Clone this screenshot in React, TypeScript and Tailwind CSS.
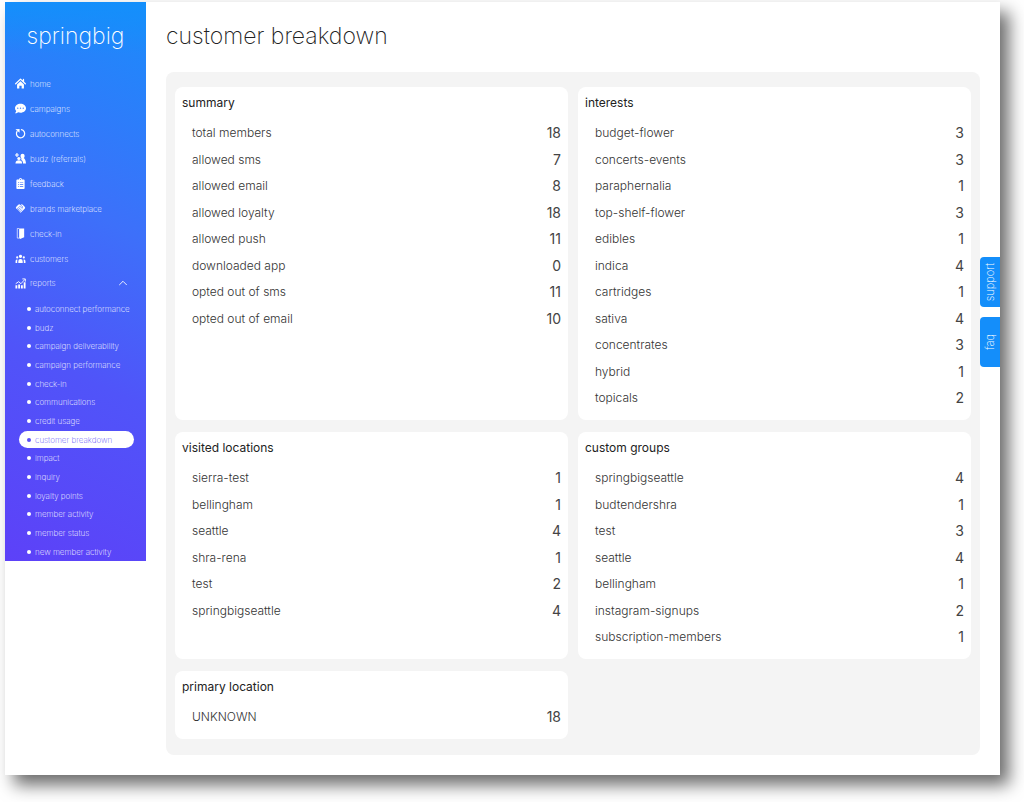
import clsx from "clsx";
import type { ComponentType, SVGProps } from "react";
import { FaCommentDots, FaClipboardList } from "react-icons/fa";
import { HiUserGroup } from "react-icons/hi";
import { MdHandshake } from "react-icons/md";
import { ChevronUp } from "lucide-react";

type IconProps = Pick<SVGProps<SVGSVGElement>, "className">;

interface NavItem {
	label: string;
	icon: ComponentType<IconProps>;
}

interface Group {
	title: string;
	rows: [string, number][];
}

function HomeIcon({ className }: IconProps) {
	return (
		<svg viewBox="0 0 24 24" className={className} aria-hidden="true">
			<path
				d="M1.5 12.5 12 2.5l10.500 10M18.500 3v5"
				fill="none"
				stroke="currentColor"
				strokeWidth="2.8"
				strokeLinecap="round"
				strokeLinejoin="round"
			/>
			<path
				d="M4.500 14 12 7l7.500 7v9h-5v-6h-5v6h-5z"
				fill="currentColor"
			/>
		</svg>
	);
}

function RefreshIcon({ className }: IconProps) {
	return (
		<svg viewBox="0 0 24 24" className={className} aria-hidden="true">
			<path
				d="M14 3.500a9 9 0 1 1-9.500 4"
				fill="none"
				stroke="currentColor"
				strokeWidth="2.6"
				strokeLinecap="round"
			/>
			<path d="M1 2.500 10 2v8.500z" fill="currentColor" />
		</svg>
	);
}

function ReferralIcon({ className }: IconProps) {
	return (
		<svg viewBox="0 0 24 24" className={className} aria-hidden="true">
			<path d="M3 0h2.500v3h3v2.500h-3v3H3v-3H0V3h3z" fill="currentColor" />
			<circle cx="8.500" cy="12" r="3.500" fill="currentColor" />
			<path d="M1 23c0-5 3-7 7.500-7s7 2 7 7z" fill="currentColor" />
			<path
				d="M12 6a4.500 4.500 0 0 1 9 0c0 2.500-.8 4-2 5 3 2 4.500 6 5 12h-6.500c0-4-1-6-4-7.500 1-3 .5-5-1-6.500z"
				fill="currentColor"
			/>
		</svg>
	);
}

function DoorIcon({ className }: IconProps) {
	return (
		<svg viewBox="0 0 24 24" className={className} aria-hidden="true">
			<path
				d="M9 1H5v21h4"
				fill="none"
				stroke="currentColor"
				strokeWidth="1.5"
			/>
			<path d="M9 1h11v19l-9 4-2-2z" fill="currentColor" />
		</svg>
	);
}

function ReportsIcon({ className }: IconProps) {
	return (
		<svg viewBox="0 0 24 24" className={className} aria-hidden="true">
			<path
				d="M1 16h4v7H1zM7 14h4v9H7zM13 16h4v7h-4zM19 9h4v14h-4z"
				fill="currentColor"
			/>
			<path
				d="M1.500 12.500 8 8l5 4.500L21.500 3M16 2h6.500v6"
				fill="none"
				stroke="currentColor"
				strokeWidth="2"
			/>
		</svg>
	);
}

const navItems: NavItem[] = [
	{ label: "home", icon: HomeIcon },
	{ label: "campaigns", icon: FaCommentDots },
	{ label: "autoconnects", icon: RefreshIcon },
	{ label: "budz (referrals)", icon: ReferralIcon },
	{ label: "feedback", icon: FaClipboardList },
	{ label: "brands marketplace", icon: MdHandshake },
	{ label: "check-in", icon: DoorIcon },
	{ label: "customers", icon: HiUserGroup },
];

const reports = [
	"autoconnect performance",
	"budz",
	"campaign deliverability",
	"campaign performance",
	"check-in",
	"communications",
	"credit usage",
	"customer breakdown",
	"impact",
	"inquiry",
	"loyalty points",
	"member activity",
	"member status",
	"new member activity",
];

const groups: Group[] = [
	{
		title: "summary",
		rows: [
			["total members", 18],
			["allowed sms", 7],
			["allowed email", 8],
			["allowed loyalty", 18],
			["allowed push", 11],
			["downloaded app", 0],
			["opted out of sms", 11],
			["opted out of email", 10],
		],
	},
	{
		title: "interests",
		rows: [
			["budget-flower", 3],
			["concerts-events", 3],
			["paraphernalia", 1],
			["top-shelf-flower", 3],
			["edibles", 1],
			["indica", 4],
			["cartridges", 1],
			["sativa", 4],
			["concentrates", 3],
			["hybrid", 1],
			["topicals", 2],
		],
	},
	{
		title: "visited locations",
		rows: [
			["sierra-test", 1],
			["bellingham", 1],
			["seattle", 4],
			["shra-rena", 1],
			["test", 2],
			["springbigseattle", 4],
		],
	},
	{
		title: "custom groups",
		rows: [
			["springbigseattle", 4],
			["budtendershra", 1],
			["test", 3],
			["seattle", 4],
			["bellingham", 1],
			["instagram-signups", 2],
			["subscription-members", 1],
		],
	},
	{ title: "primary location", rows: [["UNKNOWN", 18]] },
];

function Sidebar() {
	return (
		<nav className="w-[141px] shrink-0 self-start bg-linear-[205deg,#1a8cfb,#3d70fa_38%,#5054f9_65%,#5d41f8] pb-px text-[8px] font-extralight text-white">
			<a
				href="#"
				className="block bg-linear-to-b from-[#148ffb] to-transparent pt-4 text-center text-[23px] leading-9"
			>
				springbig
			</a>

			<ul className="mt-[17px]">
				{navItems.map(({ label, icon: Icon }) => (
					<li key={label}>
						<a
							href="#"
							className="flex h-[25px] items-center gap-1 pl-2.5"
						>
							<Icon className="size-[11px]" />
							{label}
						</a>
					</li>
				))}
				<li>
					<button
						type="button"
						className="flex h-6 w-full items-center gap-1 pr-4 pl-2.5"
					>
						<ReportsIcon className="size-[11px]" />
						reports
						<ChevronUp className="ml-auto size-3.5" strokeWidth={1.5} />
					</button>

					{/* Reports submenu */}
					<ul className="mt-[5px] flex flex-col gap-0.5 pr-3 pl-3.5">
						{reports.map(label => (
							<li key={label} className="group">
								<a
									href="#"
									className={clsx(
										"flex h-[17px] items-center gap-1 rounded-full pl-2 whitespace-nowrap group-nth-[3n]:h-4",
										label === "customer breakdown" &&
											"bg-white text-[#5b4ff8]"
									)}
								>
									<span className="size-1 rounded-full bg-current" />
									{label}
								</a>
							</li>
						))}
					</ul>
				</li>
			</ul>
		</nav>
	);
}

function Card({ title, rows }: Group) {
	return (
		<section className="rounded-lg bg-white px-[7px] pt-1.5 pb-[9px]">
			<h2 className="text-xs leading-5 text-[#222]">{title}</h2>
			<table className="mt-[7px] w-full leading-5">
				<tbody>
					{rows.map(([label, value]) => (
						<tr key={label} className="h-[26px] even:h-[27px]">
							<th
								scope="row"
								className="pl-2.5 text-left text-xs leading-5 font-light text-[#333]"
							>
								{label}
							</th>
							<td className="text-right text-sm leading-5 text-[#444]">
								{value}
							</td>
						</tr>
					))}
				</tbody>
			</table>
		</section>
	);
}

export default function App() {
	return (
		<div className="min-h-screen overflow-hidden bg-white pt-0.5 pr-6 pb-[26px] pl-[5px] font-['Inter','Liberation_Sans',sans-serif]">
			<div className="relative flex bg-white pb-5 shadow-[9px_10px_16px_rgba(0,0,0,0.58)]">
				<Sidebar />

				<main className="min-w-0 flex-1 pr-5 pl-5">
					<h1 className="pt-4 text-[23px] leading-9 font-extralight text-[#222]">
						customer breakdown
					</h1>
					<div className="mt-[18px] grid grid-cols-2 gap-x-2.5 gap-y-3 rounded-lg bg-[#f4f4f4] px-[9px] pt-[15px] pb-4">
						{groups.map(group => (
							<Card key={group.title} {...group} />
						))}
					</div>
				</main>

				{/* Help tabs */}
				<div className="absolute top-[255px] right-0 flex flex-col gap-2.5">
					{["support", "faq"].map(label => (
						<button
							key={label}
							type="button"
							className="flex h-[50px] w-5 items-center justify-center rounded-l-sm bg-[#148efa] text-[11px] font-extralight text-white"
						>
							<span className="rotate-180 [writing-mode:vertical-rl]">
								{label}
							</span>
						</button>
					))}
				</div>
			</div>
		</div>
	);
}
